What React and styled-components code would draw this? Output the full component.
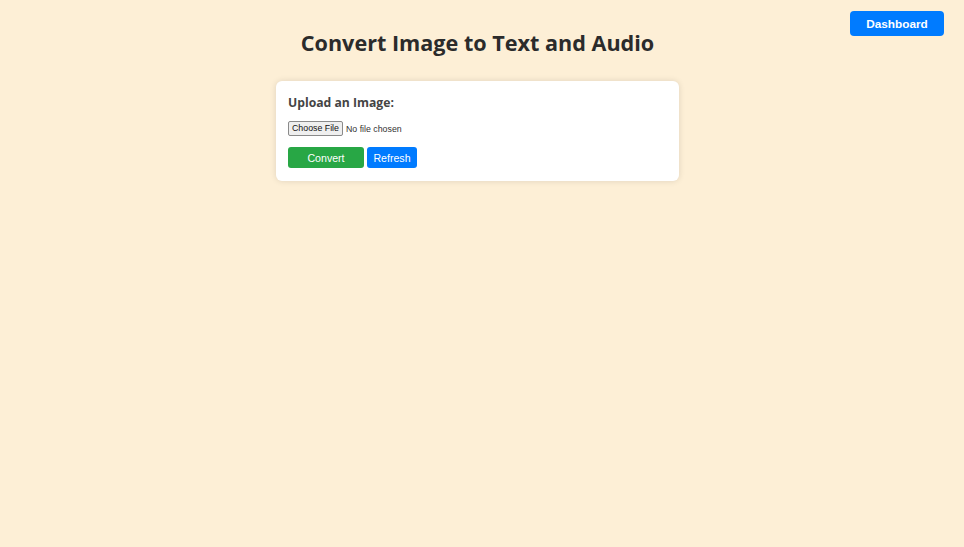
import React from 'react';
import styled, { createGlobalStyle } from 'styled-components';

const GlobalStyle = createGlobalStyle`
  html, body {
    margin: 0;
    padding: 0;
    background: #fdefd6;
    font-family: "Liberation Sans", Arial, sans-serif;
  }
`;

const Page = styled.div`
  min-height: 547px;
  padding: 11px 20px 0 11px;
  box-sizing: border-box;
`;

const TopBar = styled.div`
  display: flex;
  justify-content: flex-end;
  height: 24px;
`;

const DashboardButton = styled.button`
  width: 94px;
  height: 25px;
  border: none;
  border-radius: 4px;
  background: #007bff;
  color: #fff;
  font-family: "Liberation Sans", Arial, sans-serif;
  font-weight: bold;
  font-size: 11.8px;
  padding: 0;
  cursor: pointer;
`;

const Title = styled.h1`
  margin: -8px 0 0;
  text-align: center;
  font-family: "Open Sans", "Noto Sans", sans-serif;
  font-size: 21.6px;
  font-weight: 700;
  color: #2b2b2b;
  line-height: 32px;
`;

const Card = styled.div`
  width: 403px;
  margin: 22px auto 0;
  box-sizing: border-box;
  background: #fff;
  border-radius: 6px;
  box-shadow: 0 0 6px rgba(0, 0, 0, 0.12);
  padding: 12px 12px 13px;
`;

const Label = styled.h3`
  margin: 0 0 8px;
  font-family: "Open Sans", "Noto Sans", sans-serif;
  font-size: 12.2px;
  font-weight: 700;
  color: #444;
  line-height: 20px;
`;

const FileRow = styled.div`
  display: flex;
  align-items: center;
  gap: 3px;
  font-size: 8.8px;
  color: #333;
`;

const ChooseButton = styled.span`
  display: inline-block;
  padding: 1px 3px;
  border: 1px solid #8a8a8a;
  border-radius: 2px;
  background: #efefef;
  color: #111;
  font-size: 8.8px;
  line-height: 11px;
`;

const Actions = styled.div`
  display: flex;
  gap: 3px;
  margin-top: 11px;
`;

const ActionButton = styled.button`
  width: ${(p) => p.$width}px;
  height: 21px;
  border: none;
  border-radius: 3px;
  background: ${(p) => p.$color};
  color: #fff;
  font-family: "Liberation Sans", Arial, sans-serif;
  font-size: 10.6px;
  padding: 0;
  cursor: pointer;
`;

export default function App() {
  return (
    <Page>
      <GlobalStyle />
      <TopBar>
        <DashboardButton>Dashboard</DashboardButton>
      </TopBar>
      <Title>Convert Image to Text and Audio</Title>
      <Card>
        <Label>Upload an Image:</Label>
        <FileRow>
          <ChooseButton>Choose File</ChooseButton>
          <span>No file chosen</span>
        </FileRow>
        <Actions>
          <ActionButton $width={76} $color="#28a745">Convert</ActionButton>
          <ActionButton $width={50} $color="#007bff">Refresh</ActionButton>
        </Actions>
      </Card>
    </Page>
  );
}
